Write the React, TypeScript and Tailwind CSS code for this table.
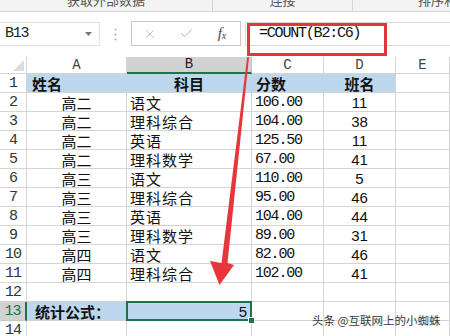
import React from 'react';
import { X, Check } from 'lucide-react';

const cjk = "font-['Noto_Sans_CJK_SC',sans-serif]";
const mono = "font-['Liberation_Mono','Noto_Sans_CJK_SC',monospace]";
const sans = "font-['Liberation_Sans',Arial,sans-serif]";

const rows = [
  ['高二', '语文', '106.00', '11'],
  ['高二', '理科综合', '104.00', '38'],
  ['高二', '英语', '125.50', '11'],
  ['高二', '理科数学', '67.00', '41'],
  ['高三', '语文', '110.00', '5'],
  ['高三', '理科综合', '95.00', '46'],
  ['高三', '英语', '104.00', '44'],
  ['高三', '理科数学', '89.00', '31'],
  ['高四', '语文', '82.00', '46'],
  ['高四', '理科综合', '102.00', '41'],
];

const grid = 'grid grid-cols-[27px_100px_125px_72px_72px_54px]';
const cell = 'border-r border-b border-[#d4d4d4] flex items-center overflow-hidden whitespace-nowrap leading-[17px]';

const RowHead: React.FC<{ n: number; active?: boolean }> = ({ n, active }) => (
  <div
    className={`${mono} text-[15px] leading-[17px] tracking-[-1px] flex items-center justify-center border-b overflow-hidden ${
      active
        ? 'bg-[#d2d2d2] text-[#217346] border-r-2 border-r-[#217346] border-b-[#c4c4c4]'
        : 'text-[#333] border-r border-[#d4d4d4]'
    }`}
  >
    {n}
  </div>
);

const App: React.FC = () => {
  return (
    <div className="relative w-[450px] h-[336px] overflow-hidden bg-white">
      {/* ribbon group labels */}
      <div className={`${cjk} flex h-[12px] bg-[#f3f3f3] border-b border-[#d5d5d5] overflow-hidden text-[13px] leading-[14px] text-[#555] whitespace-nowrap`}>
        <div className="w-[213px] flex items-end justify-center pb-[4px] border-r border-[#d5d5d5]">获取外部数据</div>
        <div className="w-[140px] flex items-end justify-center pb-[4px] border-r border-[#d5d5d5]">连接</div>
        <div className="flex-1 flex items-end pl-[65px] pb-[4px] overflow-hidden">排序和筛选</div>
      </div>

      {/* formula bar */}
      <div className="flex h-[45px] items-start pt-[10px]">
        <div className="w-[100px] h-[24px] flex items-center justify-between pl-[5px] pr-[7px] border-y border-r border-[#e2e2e2]">
          <span className={`${mono} text-[15px] tracking-[-1.2px] text-[#222]`}>B13</span>
          <svg width="7" height="4" viewBox="0 0 7 4">
            <path d="M0 0 L7 0 L3.5 4 Z" fill="#777" />
          </svg>
        </div>
        <div className="w-[31px] h-[24px] flex items-center justify-center">
          <svg width="3" height="13" viewBox="0 0 3 13">
            <circle cx="1.5" cy="1.5" r="1" fill="#aaa" />
            <circle cx="1.5" cy="6.5" r="1" fill="#aaa" />
            <circle cx="1.5" cy="11.5" r="1" fill="#aaa" />
          </svg>
        </div>
        <div className="w-[110px] h-[25px] -mt-[1px] flex border border-[#c8c8c8]">
          <span className="w-[36px] flex items-center justify-center text-[#b5b5b5]">
            <X size={14} strokeWidth={1.4} />
          </span>
          <span className="w-[36px] flex items-center justify-center text-[#b5b5b5]">
            <Check size={15} strokeWidth={1.6} />
          </span>
          <span className="w-[36px] flex items-center justify-center font-['Liberation_Serif',serif] italic text-[#444] text-[15px]">
            f<span className="text-[10px] mt-[3px]">x</span>
          </span>
        </div>
        <div className="flex-1 ml-[4px] h-[24px] flex items-center pl-[13px] border-y border-l border-[#dadada]">
          <span className={`${mono} text-[15px] tracking-[-1.2px] text-[#111]`}>=COUNT(B2:C6)</span>
        </div>
      </div>

      {/* sheet */}
      <div className={`${grid} h-[17px]`}>
        <div className="border-r border-b border-[#d4d4d4] flex items-end justify-end pr-[2px] pb-[2px]">
          <svg width="11" height="11" viewBox="0 0 11 11">
            <path d="M11 0 L11 11 L0 11 Z" fill="#dcdcdc" />
          </svg>
        </div>
        {['A', 'B', 'C', 'D', 'E'].map((c) => (
          <div
            key={c}
            className={`${mono} text-[14px] leading-[15px] flex items-center justify-center border-r ${
              c === 'B'
                ? 'bg-[#d2d2d2] border-b-2 border-b-[#217346] border-r-[#c4c4c4] text-[#222]'
                : 'border-b border-[#d4d4d4] text-[#444]'
            }`}
          >
            {c}
          </div>
        ))}
      </div>

      {/* row 1 header */}
      <div className={`${grid} h-[19px]`}>
        <RowHead n={1} />
        <div className={`${cell} ${cjk} font-bold text-[15px] bg-[#bdd7ee] border-r-[#bdd7ee] pl-[5px] text-[#111]`}>姓名</div>
        <div className={`${cell} ${cjk} font-bold text-[15px] bg-[#bdd7ee] border-r-[#bdd7ee] justify-center text-[#111]`}>科目</div>
        <div className={`${cell} ${cjk} font-bold text-[15px] bg-[#bdd7ee] border-r-[#bdd7ee] pl-[4px] text-[#111]`}>分数</div>
        <div className={`${cell} ${cjk} font-bold text-[15px] bg-[#bdd7ee] justify-center text-[#111]`}>班名</div>
        <div className={cell} />
      </div>

      {rows.map((r, i) => (
        <div key={i} className={`${grid} h-[19px]`}>
          <RowHead n={i + 2} />
          <div className={`${cell} ${cjk} text-[15px] justify-center text-[#111]`}>{r[0]}</div>
          <div className={`${cell} ${cjk} text-[15px] pl-[3px] tracking-[1px] text-[#111]`}>{r[1]}</div>
          <div className={`${cell} ${mono} text-[15px] tracking-[-1.2px] pl-[3px] text-[#111]`}>{r[2]}</div>
          <div className={`${cell} ${sans} text-[15px] justify-center text-[#111]`}>{r[3]}</div>
          <div className={cell} />
        </div>
      ))}

      <div className={`${grid} h-[19px]`}>
        <RowHead n={12} />
        <div className={cell} />
        <div className={cell} />
        <div className={cell} />
        <div className={cell} />
        <div className={cell} />
      </div>

      <div className={`${grid} h-[19px]`}>
        <RowHead n={13} active />
        <div className={`${cell} ${cjk} font-bold text-[15px] bg-[#bdd7ee] border-r-[#bdd7ee] pl-[8px] text-[#111]`}>统计公式：</div>
        <div className={`${cell} relative bg-[#bdd7ee] justify-end pr-[4px] overflow-visible ${sans} text-[15px] text-[#111]`}>
          <div className="absolute -left-[1px] -top-[1px] -right-[1px] -bottom-[1px] border-2 border-[#217346]" />
          <div className="absolute -right-[4px] -bottom-[4px] w-[7px] h-[7px] bg-[#217346] border border-white z-10" />
          5
        </div>
        <div className={cell} />
        <div className={cell} />
        <div className={cell} />
      </div>

      <div className={`${grid} h-[19px]`}>
        <RowHead n={14} />
        <div className={cell} />
        <div className={cell} />
        <div className={cell} />
        <div className={cell} />
        <div className={cell} />
      </div>

      {/* annotation: red box around formula and arrow */}
      <div className="absolute left-[247px] top-[23px] w-[140px] h-[33px] border-[3px] border-[#e0363c]" />
      <svg className="absolute left-0 top-0 pointer-events-none" width="450" height="336" viewBox="0 0 450 336">
        <polygon
          points="247.2,57 249,57 227.5,263 234,265 219.5,285 210,261 221.5,263"
          fill="#e8353b"
        />
      </svg>

      <div className={`absolute left-[312px] top-[312px] ${cjk} text-[11.5px] text-[#3a3a3a] [text-shadow:0_0_2px_#fff,0_0_1px_#fff]`}>
        头条 @互联网上的小蜘蛛
      </div>
    </div>
  );
};

export default App;
